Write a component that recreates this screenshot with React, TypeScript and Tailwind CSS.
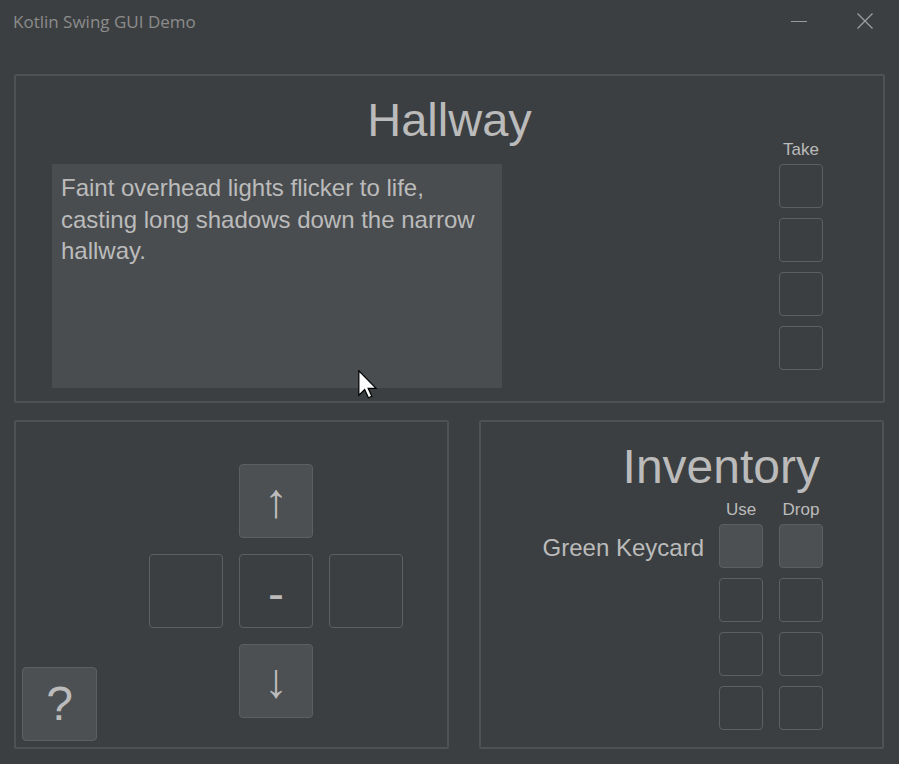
import React from "react";

const txt = "text-[#bbbbbb]";

function SlotButton({ filled = false }: { filled?: boolean }) {
  return (
    <div
      className={
        "h-[44px] w-[44px] rounded-[4px] border border-[#5e6060] " +
        (filled ? "bg-[#4c5052]" : "bg-transparent")
      }
    />
  );
}

function PadButton({
  label,
  filled = false,
  className = "",
}: {
  label?: string;
  filled?: boolean;
  className?: string;
}) {
  return (
    <div
      className={
        "flex h-[74px] w-[74px] items-center justify-center rounded-[4px] border border-[#5e6060] text-[48px] leading-none " +
        txt +
        " " +
        (filled ? "bg-[#4c5052] " : "bg-transparent ") +
        className
      }
    >
      {label}
    </div>
  );
}

function Cursor() {
  return (
    <svg
      className="pointer-events-none absolute left-[358px] top-[370px]"
      width="20"
      height="29"
      viewBox="0 0 13 19"
    >
      <path
        d="M0.5 0.5 L0.5 16.5 L4.3 12.8 L6.8 18.2 L9 17.2 L6.6 12 L11.8 12 Z"
        fill="#ffffff"
        stroke="#000000"
        strokeWidth="0.8"
        strokeLinejoin="miter"
      />
    </svg>
  );
}

export default function App() {
  return (
    <div
      className="relative flex h-[764px] w-[899px] flex-col overflow-hidden bg-[#3c3f41]"
      style={{ fontFamily: '"Liberation Sans", Arial, sans-serif' }}
    >
      {/* title bar */}
      <div className="flex h-[44px] items-center pl-[13px] pr-[26px]">
        <span
          className="flex-1 text-[17px] text-[#8c8c8c]"
          style={{ fontFamily: '"Open Sans", sans-serif' }}
        >
          Kotlin Swing GUI Demo
        </span>
        <svg width="16" height="16" viewBox="0 0 16 16" className="mt-[-2px]">
          <line x1="0" y1="8.5" x2="16" y2="8.5" stroke="#9a9a9a" strokeWidth="1" />
        </svg>
        <svg width="16" height="16" viewBox="0 0 16 16" className="ml-[50px] mt-[-2px]">
          <path d="M0.5 0.5 L15.5 15.5 M15.5 0.5 L0.5 15.5" stroke="#a0a0a0" strokeWidth="1.2" />
        </svg>
      </div>

      <div className="flex flex-1 flex-col gap-[17px] px-[14px] pt-[30px] pb-[15px]">
        {/* room panel */}
        <div className="flex h-[329px] flex-col rounded-[2px] border-2 border-[#4e5254]">
          <div className={"mt-[20px] h-[45px] text-center text-[47px] leading-none " + txt}>
            Hallway
          </div>
          <div className="flex flex-1 justify-between">
            <div
              className={
                "ml-[36px] mt-[23px] h-[224px] w-[450px] bg-[#4a4d50] pl-[9px] pt-[8px] text-[24px] leading-[31.5px] " +
                txt
              }
            >
              Faint overhead lights flicker to life, casting long shadows down the narrow hallway.
            </div>
            <div className="mr-[60px] flex w-[44px] flex-col items-center">
              <div className={"h-[17px] text-[17px] leading-none " + txt}>Take</div>
              <div className="mt-[6px] flex flex-col gap-[10px]">
                <SlotButton />
                <SlotButton />
                <SlotButton />
                <SlotButton />
              </div>
            </div>
          </div>
        </div>

        <div className="flex h-[329px] gap-[30px]">
          {/* navigation panel */}
          <div className="w-[435px] rounded-[2px] border-2 border-[#4e5254] pl-[6px] pt-[42px]">
            <div className="grid grid-cols-[75px_20px_74px_74px_74px] gap-4">
              <PadButton label="↑" filled className="col-start-4 row-start-1" />
              <PadButton className="col-start-3 row-start-2" />
              <PadButton label="-" className="col-start-4 row-start-2 pt-[5px]" />
              <PadButton className="col-start-5 row-start-2" />
              <PadButton
                label="?"
                filled
                className="col-start-1 row-start-3 mt-[23px] w-[75px]"
              />
              <PadButton label="↓" filled className="col-start-4 row-start-3 self-start" />
            </div>
          </div>

          {/* inventory panel */}
          <div className="flex w-[405px] flex-col items-end rounded-[2px] border-2 border-[#4e5254] pr-[59px]">
            <div className={"mr-[3px] mt-[21px] h-[47px] text-[48px] leading-none " + txt}>
              Inventory
            </div>
            <div className="mt-[11px] flex gap-4">
              <div className={"w-[44px] text-center text-[17px] leading-none " + txt}>Use</div>
              <div className={"w-[44px] text-center text-[17px] leading-none " + txt}>Drop</div>
            </div>
            <div className="mt-[6px] flex flex-col gap-[10px]">
              <div className="flex items-center gap-4">
                <span className={"mr-[-1px] pt-[4px] text-[24px] leading-none " + txt}>
                  Green Keycard
                </span>
                <SlotButton filled />
                <SlotButton filled />
              </div>
              {[1, 2, 3].map((i) => (
                <div key={i} className="flex justify-end gap-4">
                  <SlotButton />
                  <SlotButton />
                </div>
              ))}
            </div>
          </div>
        </div>
      </div>

      <Cursor />
    </div>
  );
}
